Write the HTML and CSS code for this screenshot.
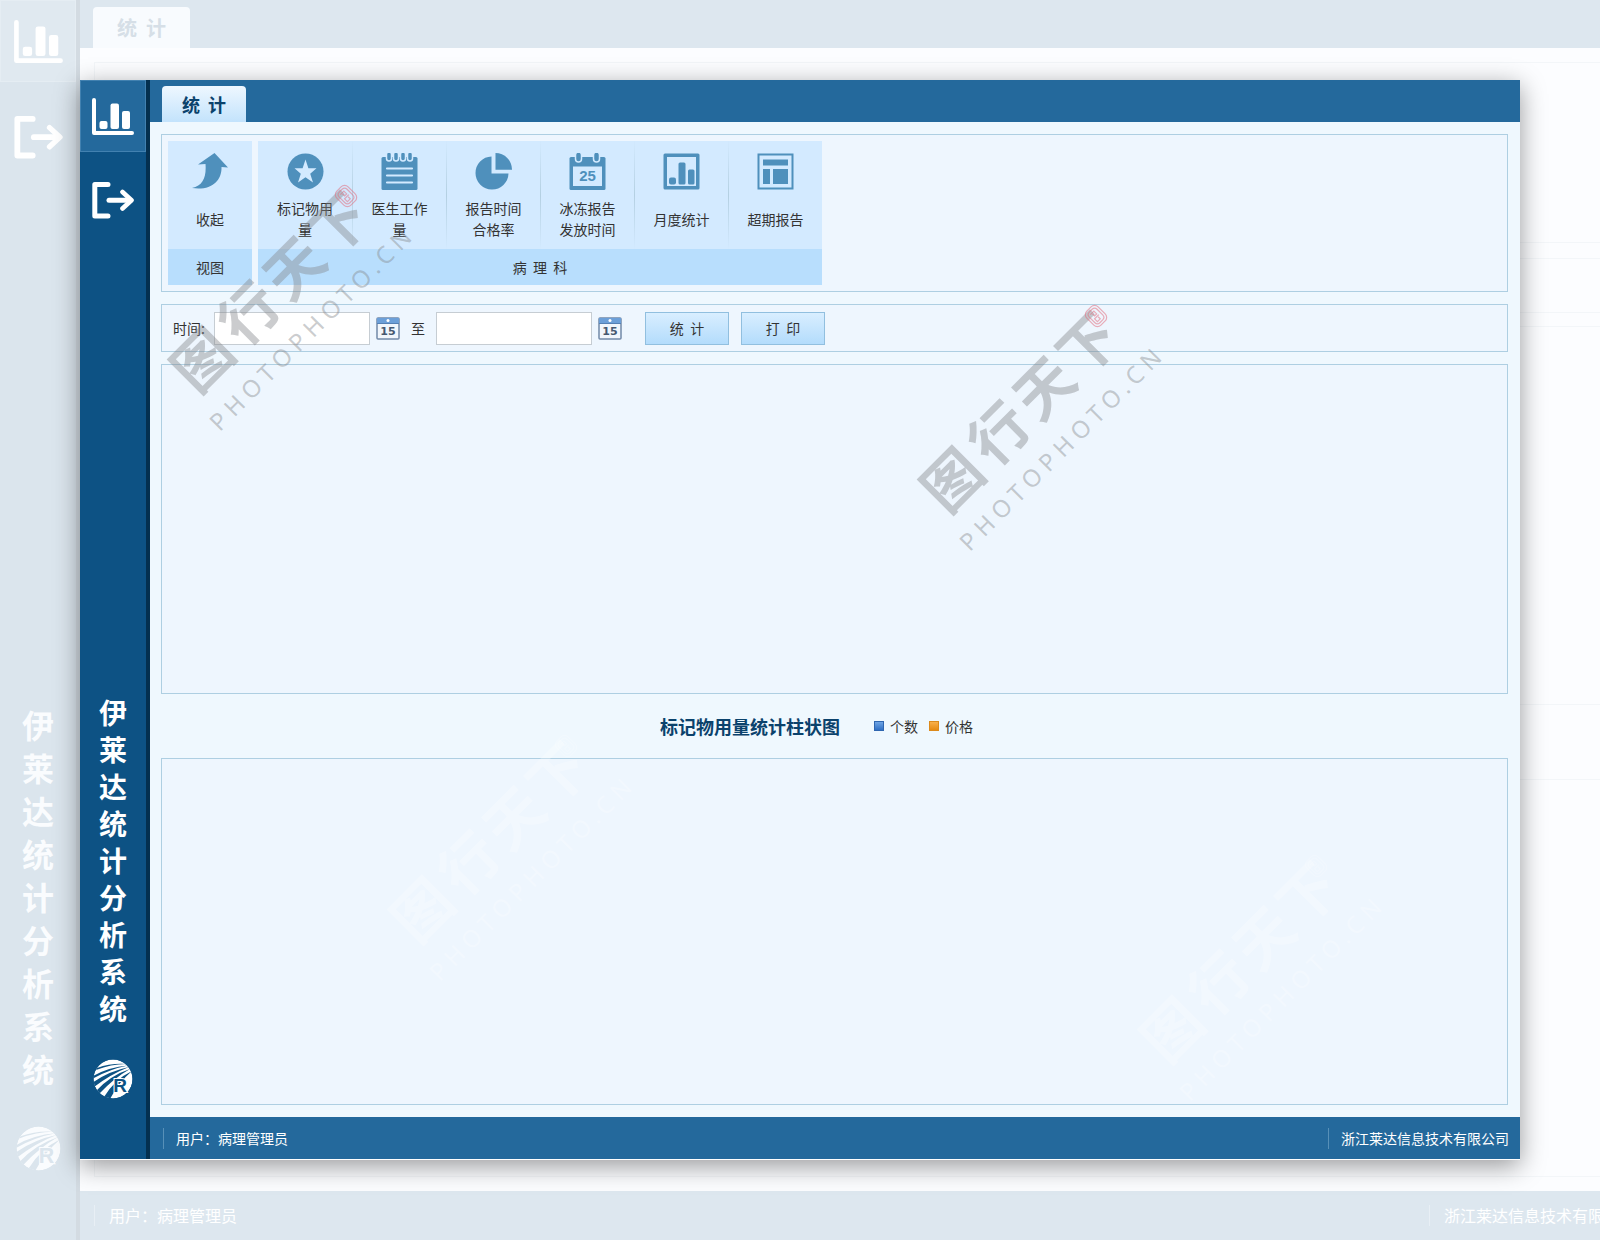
FILE: index.html
```html
<!DOCTYPE html>
<html lang="zh-CN">
<head>
<meta charset="utf-8">
<meta name="viewport" content="width=device-width, initial-scale=1">
<title>伊莱达统计分析系统</title>
<link rel="stylesheet" href="styles.css">
</head>
<body>
<svg class="defs" aria-hidden="true">
  <symbol id="i-chart" viewBox="0 0 42 37">
    <path d="M2 2V35H40" fill="none" stroke="currentColor" stroke-width="4" stroke-linecap="round" stroke-linejoin="round"/>
    <rect x="7.500" y="23" width="8" height="8" rx="2" fill="currentColor"/>
    <rect x="18.500" y="5.500" width="8.500" height="25.500" rx="2" fill="currentColor"/>
    <rect x="30" y="13" width="8" height="18" rx="2" fill="currentColor"/>
  </symbol>
  <symbol id="i-exit" viewBox="0 0 42 37">
    <path d="M16 2.500H2.800V34H16" fill="none" stroke="currentColor" stroke-width="5" stroke-linecap="round" stroke-linejoin="round"/>
    <path d="M17 18.200H38" fill="none" stroke="currentColor" stroke-width="5" stroke-linecap="round"/>
    <path d="M30.500 10L39.500 18.200L30.500 26.500" fill="none" stroke="currentColor" stroke-width="4.600" stroke-linecap="round" stroke-linejoin="round"/>
  </symbol>
  <symbol id="i-brand" viewBox="0 0 40 40">
    <clipPath id="disc"><circle cx="20" cy="20" r="19.500"/></clipPath>
    <g clip-path="url(#disc)">
      <circle cx="20" cy="20" r="19.500" fill="currentColor"/>
      <g class="rays">
        <path d="M4 9Q18 4 33 5Q18 5 3 11Z"/>
        <path d="M0 17Q16 8 35 6.500Q17 10 -1 20Z"/>
        <path d="M-1 24Q16 12 36 8Q18 15 1 28Z"/>
        <path d="M3 32Q18 16 37 10Q21 19 6 35Z"/>
        <path d="M11 38Q22 20 39 12Q26 23 17 40Z"/>
      </g>
    </g>
  </symbol>
  <symbol id="i-cal" viewBox="0 0 24 23">
    <rect x="1" y="1" width="22" height="21" rx="1" fill="#f1f6fc" stroke="#7189a8" stroke-width="1.500"/>
    <rect x="1" y="1" width="22" height="5" fill="#6c9fd8"/>
    <path d="M1 6.500H23" stroke="#5480b4" stroke-width="1"/>
    <circle cx="12" cy="3.500" r="1.500" fill="#fff"/>
  </symbol>
  <symbol id="i-seal" viewBox="0 0 28 28">
    <g transform="translate(14 14) rotate(45)" fill="none" stroke="currentColor" stroke-width="1.200">
      <rect x="-10" y="-8" width="20" height="16" rx="5"/>
      <rect x="-7.500" y="-5.500" width="15" height="11" rx="3.500"/>
      <path d="M-5 3V-2H-1V1H-4M1 -3V3H5V-1H2"/>
    </g>
  </symbol>
</svg>

<div class="stage">
  <div class="app backdrop" aria-hidden="true" inert>
    <div class="side">
      <span class="nav on"><svg><use href="#i-chart"/></svg></span>
      <span class="nav"><svg><use href="#i-exit"/></svg></span>
      <p class="name">伊莱达统计分析系统</p>
      <svg class="brand" viewBox="0 0 40 40"><use href="#i-brand" width="40" height="40"/><text x="27" y="33">R</text></svg>
    </div>
    <div class="main">
      <div class="top"><button class="tab" type="button">统  计</button></div>
      <div class="body">
        <div class="panel ghost-ribbon"></div>
        <div class="panel ghost-query"></div>
        <div class="panel list"></div>
        <div class="caption"></div>
        <div class="panel chart"></div>
      </div>
      <div class="foot"><span>用户：病理管理员</span><span>浙江莱达信息技术有限公司</span></div>
    </div>
  </div>

  <div class="app window">
    <nav class="side">
      <button class="nav on" type="button" aria-label="统计"><svg><use href="#i-chart"/></svg></button>
      <button class="nav" type="button" aria-label="退出"><svg><use href="#i-exit"/></svg></button>
      <p class="name">伊莱达统计分析系统</p>
      <svg class="brand" viewBox="0 0 40 40" aria-hidden="true"><use href="#i-brand" width="40" height="40"/><text x="27" y="33">R</text></svg>
    </nav>
    <div class="main">
      <header class="top"><button class="tab" type="button">统  计</button></header>
      <main class="body">
        <section class="panel ribbon">
          <div class="group">
            <div class="tiles">
              <button class="tile single" type="button">
                <svg viewBox="0 0 37 37"><path d="M22.500 0L36 14.500L29.500 14C30 27 20 38 0 35C11 33 14.500 24 13.500 11L6 11.500Z"/></svg>
                <span>收起</span>
              </button>
            </div>
            <h2>视图</h2>
          </div>
          <div class="group">
            <div class="tiles">
              <button class="tile" type="button">
                <svg viewBox="0 0 37 37"><circle cx="18.500" cy="18.500" r="18"/><path class="light" d="M18.500 6.500L21.400 15.200H29.500L23.200 20.700L26 29.500L18.500 24.200L11 29.500L13.800 20.700L7.500 15.200H15.600Z"/></svg>
                <span>标记物用<br>量</span>
              </button>
              <button class="tile" type="button">
                <svg viewBox="0 0 37 37"><rect x="0.500" y="4" width="36" height="33" rx="1.500"/><g class="light-line"><path d="M6 15.500H31M6 22.500H31M6 29.500H31" stroke-width="2.200" stroke-linecap="round"/><rect x="5.500" y="-1" width="5" height="9" rx="2.500"/><rect x="12.500" y="-1" width="5" height="9" rx="2.500"/><rect x="19.500" y="-1" width="5" height="9" rx="2.500"/><rect x="26.500" y="-1" width="5" height="9" rx="2.500"/></g></svg>
                <span>医生工作<br>量</span>
              </button>
              <button class="tile" type="button">
                <svg viewBox="0 0 37 37"><path d="M16.500 3.500V20.500H33.500A16.500 16.500 0 1 1 16.500 3.500Z"/><path d="M20.500 0A16.500 16.500 0 0 1 37 16.800H20.500Z"/></svg>
                <span>报告时间<br>合格率</span>
              </button>
              <button class="tile" type="button">
                <svg viewBox="0 0 37 37"><rect x="0.500" y="4" width="36" height="33" rx="1.500"/><rect class="light" x="4" y="13.500" width="29" height="19.500"/><g class="light-line"><rect x="6.500" y="-1" width="6" height="10" rx="3"/><rect x="24.500" y="-1" width="6" height="10" rx="3"/></g><text x="18.500" y="28" class="cal25">25</text></svg>
                <span>冰冻报告<br>发放时间</span>
              </button>
              <button class="tile" type="button">
                <svg viewBox="0 0 37 37"><path fill-rule="evenodd" d="M2 0.500H35Q36.500 0.500 36.500 2V35Q36.500 36.500 35 36.500H2Q0.500 36.500 0.500 35V2Q0.500 0.500 2 0.500ZM4 4V33H33V4Z"/><rect x="6" y="24.500" width="7" height="7" rx="2"/><rect x="15.500" y="9.500" width="7" height="22" rx="1.500"/><rect x="25" y="16.500" width="6.500" height="15" rx="1.500"/></svg>
                <span>月度统计</span>
              </button>
              <button class="tile" type="button">
                <svg viewBox="0 0 37 37"><path fill-rule="evenodd" d="M0.500 0.500H36.500V36.500H0.500ZM2.500 2.500V34.500H34.500V2.500Z"/><rect x="6" y="6.500" width="25" height="6"/><rect x="6" y="16" width="7" height="15"/><rect x="16" y="16" width="15" height="15"/></svg>
                <span>超期报告</span>
              </button>
            </div>
            <h2>病  理  科</h2>
          </div>
        </section>
        <form class="panel query">
          <label for="from">时间:</label>
          <input id="from" type="text">
          <button class="pick" type="button" aria-label="选择开始日期"><svg viewBox="0 0 24 23"><use href="#i-cal" width="24" height="23"/><text x="12" y="18">15</text></svg></button>
          <label class="to" for="until">至</label>
          <input id="until" type="text">
          <button class="pick" type="button" aria-label="选择结束日期"><svg viewBox="0 0 24 23"><use href="#i-cal" width="24" height="23"/><text x="12" y="18">15</text></svg></button>
          <div class="actions">
            <button class="btn" type="button">统  计</button>
            <button class="btn" type="button">打  印</button>
          </div>
        </form>
        <section class="panel list"></section>
        <div class="caption">
          <h1>标记物用量统计柱状图</h1>
          <ul class="legend">
            <li class="count">个数</li>
            <li class="price">价格</li>
          </ul>
        </div>
        <section class="panel chart"></section>
      </main>
      <footer class="foot"><span>用户：病理管理员</span><span>浙江莱达信息技术有限公司</span></footer>
    </div>
  </div>

  <svg class="mark mark-1" viewBox="0 0 260 260" aria-hidden="true">
    <g transform="translate(43 201) rotate(-45)">
      <text x="-21 45 109 171" y="14" class="wm-cn">图行天下</text>
      <text x="-31" y="56" class="wm-en">PHOTOPHOTO.CN</text>
    </g>
    <use href="#i-seal" x="173" y="12" width="28" height="28"/>
  </svg>
  <svg class="mark mark-2" viewBox="0 0 260 260" aria-hidden="true">
    <g transform="translate(43 201) rotate(-45)">
      <text x="-21 45 109 171" y="14" class="wm-cn">图行天下</text>
      <text x="-31" y="56" class="wm-en">PHOTOPHOTO.CN</text>
    </g>
    <use href="#i-seal" x="173" y="12" width="28" height="28"/>
  </svg>
  <svg class="mark pale mark-3" viewBox="0 0 260 260" aria-hidden="true">
    <g transform="translate(43 201) rotate(-45)">
      <text x="-21 45 109 171" y="14" class="wm-cn">图行天下</text>
      <text x="-31" y="56" class="wm-en">PHOTOPHOTO.CN</text>
    </g>
    <use href="#i-seal" x="173" y="12" width="28" height="28"/>
  </svg>
  <svg class="mark pale mark-4" viewBox="0 0 260 260" aria-hidden="true">
    <g transform="translate(43 201) rotate(-45)">
      <text x="-21 45 109 171" y="14" class="wm-cn">图行天下</text>
      <text x="-31" y="56" class="wm-en">PHOTOPHOTO.CN</text>
    </g>
    <use href="#i-seal" x="173" y="12" width="28" height="28"/>
  </svg>
</div>
</body>
</html>
```
FILE: styles.css
```css
*, *::before { box-sizing: border-box; }

body {
  margin: 0;
  color: #333;
  font: 14px/21px "Noto Sans CJK SC", "Noto Sans", sans-serif;
}

button, input { font: inherit; color: inherit; }
button { border: 0; padding: 0; background: none; cursor: pointer; }
h1, h2, p, ul { margin: 0; padding: 0; }
.defs { position: absolute; width: 0; height: 0; }

.stage {
  position: relative;
  display: grid;
  grid-template-columns: minmax(0, 1fr);
  min-height: 100vh;
  overflow: hidden;
}

/* Shared application frame */
.app { grid-area: 1 / 1; display: flex; min-width: 0; }
.side {
  display: flex;
  flex: none;
  flex-direction: column;
  align-items: center;
  color: #fff;
}
.nav {
  display: flex;
  align-items: center;
  justify-content: center;
  width: 100%;
  color: #fff;
}
.name { margin-top: auto; font-weight: 700; text-align: center; word-break: break-all; }
.rays { fill: var(--bar); }
.brand text {
  fill: var(--bar);
  stroke: currentColor;
  stroke-width: 2px;
  paint-order: stroke;
  font: bold 19px "Liberation Sans", sans-serif;
  text-anchor: middle;
}
.main { display: flex; flex: 1; flex-direction: column; min-width: 0; }
.top { display: flex; align-items: flex-end; }
.tab { font-weight: 700; white-space: pre; }
.body { display: flex; flex: 1; flex-direction: column; }
.panel { border: 1px solid #aecfe2; background: #eef6fe; }
.list { flex: 330 1 0; }
.chart { flex: 347 1 0; }
.foot { display: flex; align-items: center; justify-content: space-between; color: #fff; white-space: nowrap; }
.foot span { border-left: 1px solid; }

/* Faded copy behind the window */
.backdrop { --bar: #dbe5ed; width: calc(100% + 48px); background: #fcfdff; }
.backdrop .side {
  width: 80px;
  padding-bottom: 69px;
  border-right: 4px solid #d3dbe2;
  background: #dbe5ed;
}
.backdrop .side { color: #fafcfe; }
.backdrop .nav { height: 110px; }
.backdrop .nav.on { height: 82px; border: 1px solid #e5edf3; background: #e0e9f0; }
.backdrop .nav svg { width: 49px; height: 43px; }
.backdrop .name { width: 34px; font-size: 32px; line-height: 43px; }
.backdrop .brand { width: 45px; height: 45px; margin-top: 36px; }
.backdrop .top { height: 48px; padding-left: 13px; background: #dde7ef; }
.backdrop .tab {
  width: 97px;
  height: 41px;
  border-radius: 4px 4px 0 0;
  background: #f8fbfe;
  color: #d6dfe7;
  font-size: 20px;
}
.backdrop .body { padding: 14px; }
.backdrop .panel { border-color: #f3f6f9; background: #fcfdff; }
.ghost-ribbon { height: 181px; margin-bottom: 15px; }
.ghost-query { height: 55px; margin-bottom: 13px; }
.backdrop .caption { height: 74px; }
.backdrop .foot { height: 49px; padding: 0 12px 0 14px; background: #dde7ef; font-size: 16px; }
.backdrop .foot span { padding-left: 14px; border-color: #e8eff5; }

/* Foreground window */
.window {
  --bar: #0d5284;
  margin: 80px;
  border-bottom: 1px solid #fff;
  background: #eff8fe;
  box-shadow: 0 6px 24px rgba(0, 0, 0, 0.4);
}
.window .side {
  width: 70px;
  padding-bottom: 60px;
  border-right: 4px solid #04304f;
  background: #0d5284;
}
.window .nav { height: 96px; }
.window .nav.on { height: 72px; border: 1px solid #4281b0; background: #24699c; }
.window .nav svg { width: 42px; height: 37px; }
.window .name { width: 30px; font-size: 28px; line-height: 37px; }
.window .brand { width: 40px; height: 40px; margin-top: 32px; }
.window .top { height: 42px; padding-left: 12px; background: #24699c; }
.window .tab {
  width: 84px;
  height: 36px;
  border-radius: 4px 4px 0 0;
  background: linear-gradient(#eef7ff, #c3e3fc);
  color: #0b426c;
  font-size: 18px;
}
.window .body { padding: 12px 12px 12px 11px; }
.window .foot { height: 42px; padding: 0 11px 0 13px; background: #24699c; }
.window .foot span { padding-left: 12px; border-color: #5790b8; }

/* Ribbon */
.ribbon { display: flex; gap: 6px; margin-bottom: 12px; padding: 6px; }
.tiles { display: flex; background: #d3eaff; }
.tile {
  display: flex;
  flex-direction: column;
  align-items: center;
  gap: 8px;
  width: 94px;
  padding: 12px 0 9px;
}
.tile.single { width: 84px; }
.tile + .tile {
  border-left: 1px solid;
  border-image: linear-gradient(transparent, #b4d0e2 50%, transparent) 1;
}
.tile svg { width: 37px; height: 37px; fill: #4f90bc; }
.tile .light { fill: #d3eaff; }
.light-line { stroke: #d3eaff; stroke-width: 1.5px; }
.tile span { display: flex; align-items: center; height: 42px; text-align: center; }
.cal25 { font: bold 15px "Liberation Sans", sans-serif; text-anchor: middle; }
.group h2 {
  background: #b8defd;
  font-size: 14px;
  font-weight: 400;
  line-height: 36px;
  text-align: center;
  white-space: pre;
}

/* Query bar */
.query {
  display: flex;
  align-items: center;
  gap: 6px;
  height: 48px;
  margin-bottom: 12px;
  padding: 0 11px;
}
.query label { flex: none; min-width: 35px; }
.query .to { min-width: 0; margin: 0 5px; }
.query input { width: 156px; height: 33px; padding: 0 6px; border: 1px solid #c6cdd3; background: #fff; }
.pick, .pick svg { display: block; width: 24px; height: 23px; }
.pick text { fill: #465870; font: bold 11px "DejaVu Sans", sans-serif; text-anchor: middle; }
.actions { display: flex; gap: 12px; margin-left: 17px; }
.btn {
  width: 84px;
  height: 33px;
  border: 1px solid #91bfdf;
  background: linear-gradient(#d9eeff, #b3dcfc);
  white-space: pre;
}

/* Chart caption */
.caption { display: flex; align-items: center; justify-content: center; gap: 34px; height: 64px; padding-right: 36px; }
.caption h1 { color: #0b426c; font-size: 18px; line-height: 24px; }
.legend { display: flex; gap: 11px; list-style: none; }
.legend li { display: flex; align-items: center; gap: 6px; }
.legend li::before { content: ""; width: 10px; height: 10px; }
.count::before { border: 1px solid #2f66b0; background: linear-gradient(#6ea4e4, #2f6fc4); }
.price::before { border: 1px solid #dc8a1c; background: linear-gradient(#f8b04c, #e68a12); }

/* Watermarks lie over the whole page */
.mark {
  position: absolute;
  width: 260px;
  height: 260px;
  overflow: visible;
  pointer-events: none;
  color: rgba(225, 110, 125, 0.55);
  fill: rgba(130, 134, 138, 0.42);
}
.mark-1 { left: 159px; top: 170px; }
.mark-2 { left: 909px; top: 290px; }
.mark-3 { left: 379px; top: 720px; }
.mark-4 { left: 1129px; top: 840px; }
.wm-cn { font: 700 58px "Noto Sans CJK SC", sans-serif; }
.wm-en { font: 24px "Noto Sans", sans-serif; letter-spacing: 6px; }
.pale { color: rgba(255, 255, 255, 0.2); fill: rgba(255, 255, 255, 0.28); }
```
